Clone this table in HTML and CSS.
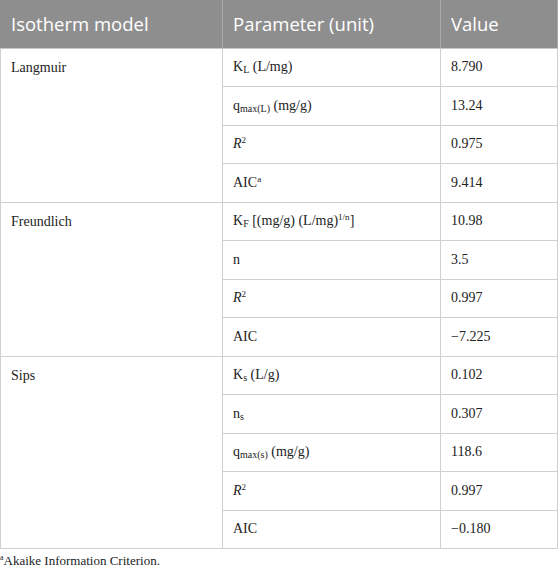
FILE: index.html
```html
<!DOCTYPE html>
<html>
<head>
<meta charset="utf-8">
<link rel="stylesheet" href="styles.css">
</head>
<body>
<table class="iso">
  <colgroup>
    <col class="c1"><col class="c2"><col class="c3">
  </colgroup>
  <thead>
    <tr><th>Isotherm model</th><th>Parameter (unit)</th><th>Value</th></tr>
  </thead>
  <tbody>
    <tr><td rowspan="4" class="model">Langmuir</td><td>K<sub>L</sub> (L/mg)</td><td>8.790</td></tr>
    <tr><td>q<sub>max(L)</sub> (mg/g)</td><td>13.24</td></tr>
    <tr><td><i>R</i><sup>2</sup></td><td>0.975</td></tr>
    <tr><td>AIC<sup>a</sup></td><td>9.414</td></tr>
    <tr><td rowspan="4" class="model">Freundlich</td><td>K<sub>F</sub> [(mg/g) (L/mg)<sup>1/n</sup>]</td><td>10.98</td></tr>
    <tr><td>n</td><td>3.5</td></tr>
    <tr><td><i>R</i><sup>2</sup></td><td>0.997</td></tr>
    <tr><td>AIC</td><td>&minus;7.225</td></tr>
    <tr><td rowspan="5" class="model">Sips</td><td>K<sub>s</sub> (L/g)</td><td>0.102</td></tr>
    <tr><td>n<sub>s</sub></td><td>0.307</td></tr>
    <tr><td>q<sub>max(s)</sub> (mg/g)</td><td>118.6</td></tr>
    <tr><td><i>R</i><sup>2</sup></td><td>0.997</td></tr>
    <tr><td>AIC</td><td>&minus;0.180</td></tr>
  </tbody>
</table>
<p class="note"><sup>a</sup>Akaike Information Criterion.</p>
</body>
</html>
```
FILE: styles.css
```css
html, body {
  margin: 0;
  padding: 0;
  background: #fff;
}
body {
  font-family: "Liberation Serif", "Times New Roman", serif;
  color: #222;
}
.iso {
  border-collapse: collapse;
  width: 557px;
  table-layout: fixed;
}
.c1 { width: 222px; }
.c2 { width: 218px; }
.c3 { width: 117px; }
.iso th {
  background: #8e8e8e;
  color: #fff;
  font-family: "Open Sans", "Noto Sans", sans-serif;
  font-weight: 400;
  font-size: 18.5px;
  text-align: left;
  height: 48px;
  padding: 0 10px;
  box-sizing: border-box;
  border-left: 1px solid #ababab;
  border-right: 1px solid #ababab;
  border-bottom: 1px solid #c8c8c8;
}
.iso th:first-child { border-left: 1px solid #8e8e8e; }
.iso td {
  font-size: 14px;
  height: 38.5px;
  padding: 0 10px;
  box-sizing: border-box;
  border: 1px solid #cfcfcf;
  vertical-align: middle;
}
.iso td.model {
  vertical-align: top;
  padding-top: 11px;
}
.iso sub {
  font-size: 10px;
  vertical-align: -2px;
  line-height: 0;
}
.iso sup {
  font-size: 9px;
  vertical-align: 5px;
  line-height: 0;
}
.note {
  margin: 4px 0 0 0;
  font-size: 13px;
  line-height: 16px;
}
.note sup {
  font-size: 8px;
  vertical-align: 5px;
  line-height: 0;
}
```
